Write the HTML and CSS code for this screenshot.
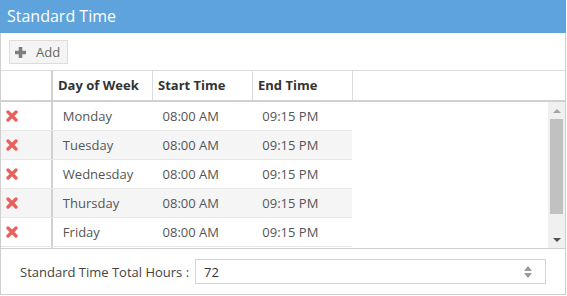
FILE: index.html
```html
<!DOCTYPE html>
<html lang="en">
<head>
<meta charset="utf-8">
<title>Standard Time</title>
<link rel="stylesheet" href="styles.css">
</head>
<body>

<div class="panel">
	<div class="panel-title">Standard Time</div>

	<div class="toolbar">
		<button class="btn-add">
			<svg width="13" height="13" viewBox="0 0 13 13"><path d="M6.5 1v11M1 6.5h11" stroke="#7d7d7d" stroke-width="3.6"/></svg>
			Add
		</button>
	</div>

	<div class="grid">
		<div class="grid-head">
			<div class="cell cell-del"></div>
			<div class="cell">Day of Week</div>
			<div class="cell">Start Time</div>
			<div class="cell">End Time</div>
		</div>

		<div class="grid-body">
			<div class="rows">
				<div class="row">
					<div class="cell cell-del"><svg class="del" width="12" height="12" viewBox="0 0 12 12"><path d="M2 2l8 8M10 2l-8 8"/></svg></div>
					<div class="cell">Monday</div><div class="cell">08:00 AM</div><div class="cell">09:15 PM</div>
				</div>
				<div class="row">
					<div class="cell cell-del"><svg class="del" width="12" height="12" viewBox="0 0 12 12"><path d="M2 2l8 8M10 2l-8 8"/></svg></div>
					<div class="cell">Tuesday</div><div class="cell">08:00 AM</div><div class="cell">09:15 PM</div>
				</div>
				<div class="row">
					<div class="cell cell-del"><svg class="del" width="12" height="12" viewBox="0 0 12 12"><path d="M2 2l8 8M10 2l-8 8"/></svg></div>
					<div class="cell">Wednesday</div><div class="cell">08:00 AM</div><div class="cell">09:15 PM</div>
				</div>
				<div class="row">
					<div class="cell cell-del"><svg class="del" width="12" height="12" viewBox="0 0 12 12"><path d="M2 2l8 8M10 2l-8 8"/></svg></div>
					<div class="cell">Thursday</div><div class="cell">08:00 AM</div><div class="cell">09:15 PM</div>
				</div>
				<div class="row">
					<div class="cell cell-del"><svg class="del" width="12" height="12" viewBox="0 0 12 12"><path d="M2 2l8 8M10 2l-8 8"/></svg></div>
					<div class="cell">Friday</div><div class="cell">08:00 AM</div><div class="cell">09:15 PM</div>
				</div>
			</div>

			<div class="vscroll">
				<div class="vscroll-btn"><svg width="8" height="4" viewBox="0 0 8 4"><path d="M4 0l4 4H0z" fill="#a3a3a3"/></svg></div>
				<div class="vscroll-track"><div class="vscroll-thumb"></div></div>
				<div class="vscroll-btn"><svg width="8" height="4" viewBox="0 0 8 4"><path d="M0 0h8L4 4z" fill="#505050"/></svg></div>
			</div>
		</div>
	</div>

	<div class="footer">
		<label class="total-label">Standard Time Total Hours :</label>
		<div class="spin">
			<span class="spin-value">72</span>
			<svg width="10" height="14" viewBox="0 0 10 14"><path d="M5 1l4 5H1zM5 13l4-5H1z" fill="#9a9a9a"/></svg>
		</div>
	</div>
</div>

</body>
</html>
```

FILE: styles.css
```css
html, body { background: #fff; }

body {
	margin: 0;
	font-family: "Open Sans", "Liberation Sans", sans-serif;
	font-size: 13px;
	color: #555;
}

.panel {
	width: 564px;
	height: 294px;
	border: 1px #cfcfcf solid;
	border-top: none;
	display: flex;
	flex-direction: column;
}

.panel-title {
	height: 33px;
	margin: 0 -1px;
	padding: 0 7px;
	background: #5ea3dc;
	color: #fff;
	font-size: 16px;
	line-height: 33px;
}

.toolbar {
	height: 37px;
	padding: 7px 0 0 8px;
	box-sizing: border-box;
}

.btn-add {
	display: flex;
	align-items: center;
	gap: 9px;
	height: 24px;
	width: 59px;
	padding: 0 0 0 4px;
	border: 1px #ddd solid;
	background: #f4f4f4;
	font-family: inherit;
	font-size: 13px;
	color: #666;
}

/* grid */
.grid-head, .row { display: flex; }

.cell {
	width: 100px;
	box-sizing: border-box;
}

.grid-head {
	height: 29px;
	border-top: 1px #dcdcdc solid;
	border-bottom: 2px #d0d0d0 solid;
	font-weight: bold;
	color: #333;
}

.grid-head .cell {
	padding-left: 5px;
	line-height: 29px;
	border-right: 1px #dcdcdc solid;
}

.row {
	width: 351px;
	height: 28px;
	border-bottom: 1px #e8e8e8 solid;
}
.row:nth-child(even) { background: #f5f5f5; }

.row .cell {
	padding-left: 10px;
	line-height: 28px;
}

.grid-head .cell-del, .row .cell-del {
	width: 52px;
	border-right: 2px #d0d0d0 solid;
}

.row .cell-del {
	display: flex;
	align-items: center;
	padding-left: 5px;
}

.del path {
	stroke: #e9605c;
	stroke-width: 3.3;
	stroke-linecap: round;
}

.grid-body {
	height: 146px;
	display: flex;
}

.rows {
	flex: 1;
	background: linear-gradient(to right, transparent 50px, #d0d0d0 50px, #d0d0d0 52px, transparent 52px);
}

/* fake scroller, drawn like the classic one */
.vscroll {
	width: 17px;
	display: flex;
	flex-direction: column;
	background: #f0f0f0;
}
.vscroll-btn {
	height: 17px;
	display: flex;
	align-items: center;
	justify-content: center;
}
.vscroll-track {
	flex: 1;
	padding: 0 2px;
}
.vscroll-thumb {
	height: 95px;
	background: #c1c1c1;
}

/* footer */
.footer {
	flex: 1;
	display: flex;
	align-items: center;
	border-top: 1px #cfcfcf solid;
	padding-left: 19px;
}

.total-label {
	width: 175px;
	color: #444;
}

.spin {
	display: flex;
	align-items: center;
	justify-content: space-between;
	width: 351px;
	height: 25px;
	padding: 0 12px 0 8px;
	box-sizing: border-box;
	border: 1px #d3d3d3 solid;
	color: #333;
}
```
